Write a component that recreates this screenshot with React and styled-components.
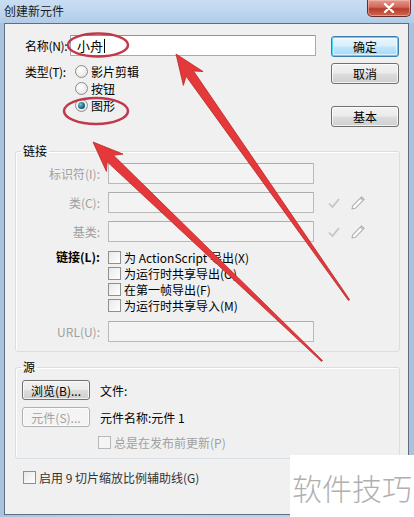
import React from "react";
import styled, { createGlobalStyle, css } from "styled-components";

const Global = createGlobalStyle`
  html, body { margin: 0; padding: 0; background: #ffffff; }
  body { font-family: "Noto Sans CJK SC", "Noto Sans", sans-serif; font-size: 12px; color: #000; }
  * { box-sizing: border-box; }
`;

const Window = styled.div`
  position: relative;
  width: 414px;
  height: 517px;
  overflow: hidden;
  display: flex;
  flex-direction: column;
  background: linear-gradient(90deg, #a9c3df 0%, #bcd4ee 30%, #b8d0ea 70%, #a9c3df 100%);
`;

const TitleBar = styled.div`
  height: 23px;
  flex: none;
  display: flex;
  align-items: flex-start;
  justify-content: space-between;
  padding: 0 3px 0 4px;
  background: linear-gradient(180deg, #c9def3 0%, #bcd5ee 60%, #b2cbe6 100%);
`;

const Title = styled.div`
  font-size: 12px;
  line-height: 21px;
  color: #1a1a1a;
`;

const CloseButton = styled.div`
  width: 44px;
  height: 17px;
  display: flex;
  align-items: center;
  justify-content: center;
  border: 1px solid #6b2a2a;
  border-top: none;
  border-radius: 0 0 5px 5px;
  background: linear-gradient(180deg, #e39a8c 0%, #d0675a 45%, #b93a2c 55%, #cf6a50 100%);
  box-shadow: inset 0 0 0 1px rgba(255, 200, 190, 0.5);
`;

const Body = styled.div`
  flex: 1;
  margin: 0 5px 2px 4px;
  border: 1px solid #5f6f82;
  background: #f0f0f0;
  padding: 11px 8px 0 10px;
  display: flex;
  flex-direction: column;
`;

const TopArea = styled.div`
  display: flex;
  padding: 0 1px 0 10px;
`;

const LeftCol = styled.div`
  flex: 1;
  display: flex;
  flex-direction: column;
`;

const FieldRow = styled.div`
  display: flex;
  align-items: ${(p) => (p.$top ? "flex-start" : "center")};
  margin-top: ${(p) => p.$mt || 0}px;
`;

const Label = styled.span`
  flex: none;
  min-width: ${(p) => p.$w}px;
  margin-right: ${(p) => p.$mr || 0}px;
  line-height: ${(p) => p.$lh || 21}px;
  white-space: nowrap;
  letter-spacing: ${(p) => (p.$tight ? "-0.3px" : "0")};
  text-align: ${(p) => (p.$right ? "right" : "left")};
  color: ${(p) => (p.$disabled ? "#a0a0a0" : "#000")};
  font-weight: ${(p) => (p.$bold ? 700 : 400)};
`;

const TextInput = styled.div`
  flex: ${(p) => (p.$w ? "none" : "1")};
  width: ${(p) => (p.$w ? `${p.$w}px` : "auto")};
  margin-left: ${(p) => p.$ml || 0}px;
  height: 21px;
  border: 1px solid ${(p) => (p.$disabled ? "#b9b9b9" : "#a5a9b2")};
  border-top-color: ${(p) => (p.$disabled ? "#adadad" : "#8e929b")};
  background: ${(p) => (p.$disabled ? "#f3f3f3" : "#ffffff")};
  border-radius: 1px;
  padding: 0 6px;
  display: flex;
  align-items: center;
  font-size: 13px;
`;

const Caret = styled.span`
  display: inline-block;
  width: 1px;
  height: 14px;
  background: #000;
  margin-left: 1px;
`;

const RadioList = styled.div`
  display: flex;
  flex-direction: column;
  margin-left: 5px;
`;

const OptionRow = styled.label`
  display: flex;
  align-items: center;
  height: ${(p) => p.$h || 17}px;
  gap: 3px;
  white-space: nowrap;
  color: ${(p) => (p.$disabled ? "#a0a0a0" : p.$soft ? "#333" : "#000")};
`;

const Radio = styled.span`
  width: 13px;
  height: 13px;
  border-radius: 50%;
  border: 1px solid #8d8d8d;
  background: radial-gradient(circle at 40% 35%, #ffffff 0%, #ececec 60%, #d6d6d6 100%);
  display: flex;
  align-items: center;
  justify-content: center;
  &::after {
    content: "";
    display: ${(p) => (p.$checked ? "block" : "none")};
    width: 7px;
    height: 7px;
    border-radius: 50%;
    background: radial-gradient(circle at 35% 35%, #7ec3d8 0%, #1d6b85 55%, #0c3e52 100%);
  }
`;

const Checkbox = styled.span`
  flex: none;
  width: 13px;
  height: 13px;
  border: 1px solid ${(p) => (p.$disabled ? "#b8b8b8" : "#8e8f8f")};
  background: ${(p) =>
    p.$disabled ? "#f4f4f4" : "linear-gradient(135deg, #e8e8e8 0%, #ffffff 100%)"};
`;

const RightCol = styled.div`
  flex: none;
  width: 68px;
  margin-left: 15px;
  display: flex;
  flex-direction: column;
  padding-top: 1px;
`;

const Button = styled.div`
  flex: none;
  width: 68px;
  height: ${(p) => p.$h || 21}px;
  margin-top: ${(p) => p.$mt || 0}px;
  display: flex;
  align-items: center;
  justify-content: center;
  border-radius: 3px;
  font-size: 12px;
  white-space: nowrap;
  color: ${(p) => (p.$disabled ? "#a2a2a2" : "#000")};
  border: 1px solid ${(p) => (p.$disabled ? "#adb2b5" : "#707070")};
  background: ${(p) =>
    p.$disabled
      ? "#f4f4f4"
      : "linear-gradient(180deg, #f2f2f2 0%, #ebebeb 48%, #dddddd 52%, #cfcfcf 100%)"};
  box-shadow: inset 0 0 0 1px rgba(255, 255, 255, 0.7);
  ${(p) =>
    p.$default &&
    css`
      border-color: #3c7fb1;
      box-shadow: inset 0 0 0 1px #48d8fb, inset 0 0 0 2px rgba(255, 255, 255, 0.6);
      background: linear-gradient(180deg, #eaf6fd 0%, #d9f0fc 48%, #bee6fd 52%, #a7d9f5 100%);
    `}
`;

const Group = styled.fieldset`
  margin: ${(p) => p.$mt || 0}px 0 0 0;
  padding: 0;
  min-width: 0;
  border: 1px solid #d5dfe5;
  border-radius: 3px;
  box-shadow: inset 1px 1px 0 #ffffff;
`;

const Legend = styled.legend`
  margin-left: 5px;
  padding: 0 2px;
  line-height: 16px;
  font-size: 12px;
  color: #000;
`;

const GroupInner = styled.div`
  display: flex;
  flex-direction: column;
  padding: ${(p) => p.$pad};
`;

const IconGroup = styled.div`
  display: flex;
  align-items: center;
  gap: 8px;
  margin-left: 13px;
`;

const CheckList = styled.div`
  display: flex;
  flex-direction: column;
  margin-left: 8px;
`;

const SourceRow = styled.div`
  display: flex;
  align-items: center;
  gap: 10px;
  margin-top: ${(p) => p.$mt || 0}px;
  padding-left: ${(p) => p.$pl || 0}px;
`;

const Plain = styled.span`
  white-space: nowrap;
  color: #000;
`;

const BottomRow = styled.div`
  margin: 10px 0 0 8px;
`;

const Overlay = styled.svg`
  position: absolute;
  left: 0;
  top: 0;
  width: 414px;
  height: 517px;
  pointer-events: none;
`;

const Watermark = styled.div`
  position: absolute;
  right: 0;
  bottom: 0;
  width: 124px;
  height: 62px;
  background: #ffffff;
  display: flex;
  align-items: center;
  justify-content: center;
  padding-top: 2px;
  font-size: 30px;
  font-weight: 300;
  letter-spacing: 0px;
  color: #b0b0b0;
`;

function arrowPoints(tip, tail, headLen, headW, shaftW) {
  const dx = tail[0] - tip[0];
  const dy = tail[1] - tip[1];
  const len = Math.hypot(dx, dy);
  const ux = dx / len;
  const uy = dy / len;
  const px = -uy;
  const py = ux;
  const bx = tip[0] + ux * headLen;
  const by = tip[1] + uy * headLen;
  const nx = tip[0] + ux * (headLen * 0.8);
  const ny = tip[1] + uy * (headLen * 0.8);
  const pts = [
    [tip[0], tip[1]],
    [bx + (px * headW) / 2, by + (py * headW) / 2],
    [nx + (px * shaftW) / 2, ny + (py * shaftW) / 2],
    [tail[0] + px * 0.7, tail[1] + py * 0.7],
    [tail[0] - px * 0.7, tail[1] - py * 0.7],
    [nx - (px * shaftW) / 2, ny - (py * shaftW) / 2],
    [bx - (px * headW) / 2, by - (py * headW) / 2],
  ];
  return pts.map((p) => p.map((v) => v.toFixed(1)).join(",")).join(" ");
}

const CheckIcon = () => (
  <svg width="14" height="14" viewBox="0 0 14 14">
    <path d="M2 7.5 L5.5 11 L12 3" fill="none" stroke="#c4c4c4" strokeWidth="1.7" />
  </svg>
);

const PencilIcon = () => (
  <svg width="18" height="18" viewBox="0 0 18 18">
    <path
      d="M3 15 L3.7 11.8 L12.6 2.9 L15.1 5.4 L6.2 14.3 Z M11.5 4 L14 6.5"
      fill="#ffffff"
      stroke="#b0b0b0"
      strokeWidth="1.1"
      strokeLinejoin="round"
    />
  </svg>
);

export default function App() {
  const links = [
    "为 ActionScript 导出(X)",
    "为运行时共享导出(O)",
    "在第一帧导出(F)",
    "为运行时共享导入(M)",
  ];
  return (
    <>
      <Global />
      <Window>
        <TitleBar>
          <Title>创建新元件</Title>
          <CloseButton>
            <svg width="12" height="10" viewBox="0 0 12 10">
              <path d="M2 1 L10 9 M10 1 L2 9" stroke="#ffffff" strokeWidth="2.4" strokeLinecap="round" />
            </svg>
          </CloseButton>
        </TitleBar>
        <Body>
          <TopArea>
            <LeftCol>
              <FieldRow>
                <Label $w={44} $mr={1} $tight>名称(N):</Label>
                <TextInput>
                  小舟
                  <Caret />
                </TextInput>
              </FieldRow>
              <FieldRow $top $mt={7}>
                <Label $w={45} $lh={17} $tight>类型(T):</Label>
                <RadioList>
                  <OptionRow>
                    <Radio />
                    影片剪辑
                  </OptionRow>
                  <OptionRow>
                    <Radio />
                    按钮
                  </OptionRow>
                  <OptionRow>
                    <Radio $checked />
                    图形
                  </OptionRow>
                </RadioList>
              </FieldRow>
            </LeftCol>
            <RightCol>
              <Button $default>确定</Button>
              <Button $mt={6}>取消</Button>
              <Button $mt={22}>基本</Button>
            </RightCol>
          </TopArea>

          <Group $mt={16}>
            <Legend>链接</Legend>
            <GroupInner $pad="4px 0 9px 0">
              <FieldRow>
                <Label $w={84} $right $disabled>标识符(I):</Label>
                <TextInput $w={206} $ml={8} $disabled />
              </FieldRow>
              <FieldRow $mt={8}>
                <Label $w={84} $right $disabled>类(C):</Label>
                <TextInput $w={206} $ml={8} $disabled />
                <IconGroup>
                  <CheckIcon />
                  <PencilIcon />
                </IconGroup>
              </FieldRow>
              <FieldRow $mt={8}>
                <Label $w={84} $right $disabled>基类:</Label>
                <TextInput $w={206} $ml={8} $disabled />
                <IconGroup>
                  <CheckIcon />
                  <PencilIcon />
                </IconGroup>
              </FieldRow>
              <FieldRow $top $mt={7}>
                <Label $w={84} $right $lh={16} $bold>链接(L):</Label>
                <CheckList>
                  {links.map((t) => (
                    <OptionRow key={t} $h={16}>
                      <Checkbox />
                      {t}
                    </OptionRow>
                  ))}
                </CheckList>
              </FieldRow>
              <FieldRow $mt={8}>
                <Label $w={84} $right $disabled>URL(U):</Label>
                <TextInput $w={206} $ml={8} $disabled />
              </FieldRow>
            </GroupInner>
          </Group>

          <Group $mt={7}>
            <Legend>源</Legend>
            <GroupInner $pad="5px 0 8px 6px">
              <SourceRow>
                <Button $h={20}>浏览(B)...</Button>
                <Plain>文件:</Plain>
              </SourceRow>
              <SourceRow $mt={7}>
                <Button $h={20} $disabled>元件(S)...</Button>
                <Plain>元件名称:元件 1</Plain>
              </SourceRow>
              <SourceRow $mt={7} $pl={76}>
                <OptionRow $h={16} $disabled>
                  <Checkbox $disabled />
                  总是在发布前更新(P)
                </OptionRow>
              </SourceRow>
            </GroupInner>
          </Group>

          <BottomRow>
            <OptionRow $h={16} $soft>
              <Checkbox />
              启用 9 切片缩放比例辅助线(G)
            </OptionRow>
          </BottomRow>
        </Body>

        <Overlay viewBox="0 0 414 517">
          <ellipse cx="98" cy="45" rx="30" ry="11.5" fill="none" stroke="#c0394a" strokeWidth="2.5" />
          <ellipse cx="96" cy="111" rx="32" ry="13" fill="none" stroke="#c0394a" strokeWidth="2.5" />
          <polygon points={arrowPoints([176, 54], [349, 300], 30, 24, 9)} fill="#e5383b" stroke="#b82a2a" strokeWidth="0.8" />
          <polygon points={arrowPoints([93, 142], [322, 361], 30, 24, 9)} fill="#e5383b" stroke="#b82a2a" strokeWidth="0.8" />
        </Overlay>
        <Watermark>软件技巧</Watermark>
      </Window>
    </>
  );
}
